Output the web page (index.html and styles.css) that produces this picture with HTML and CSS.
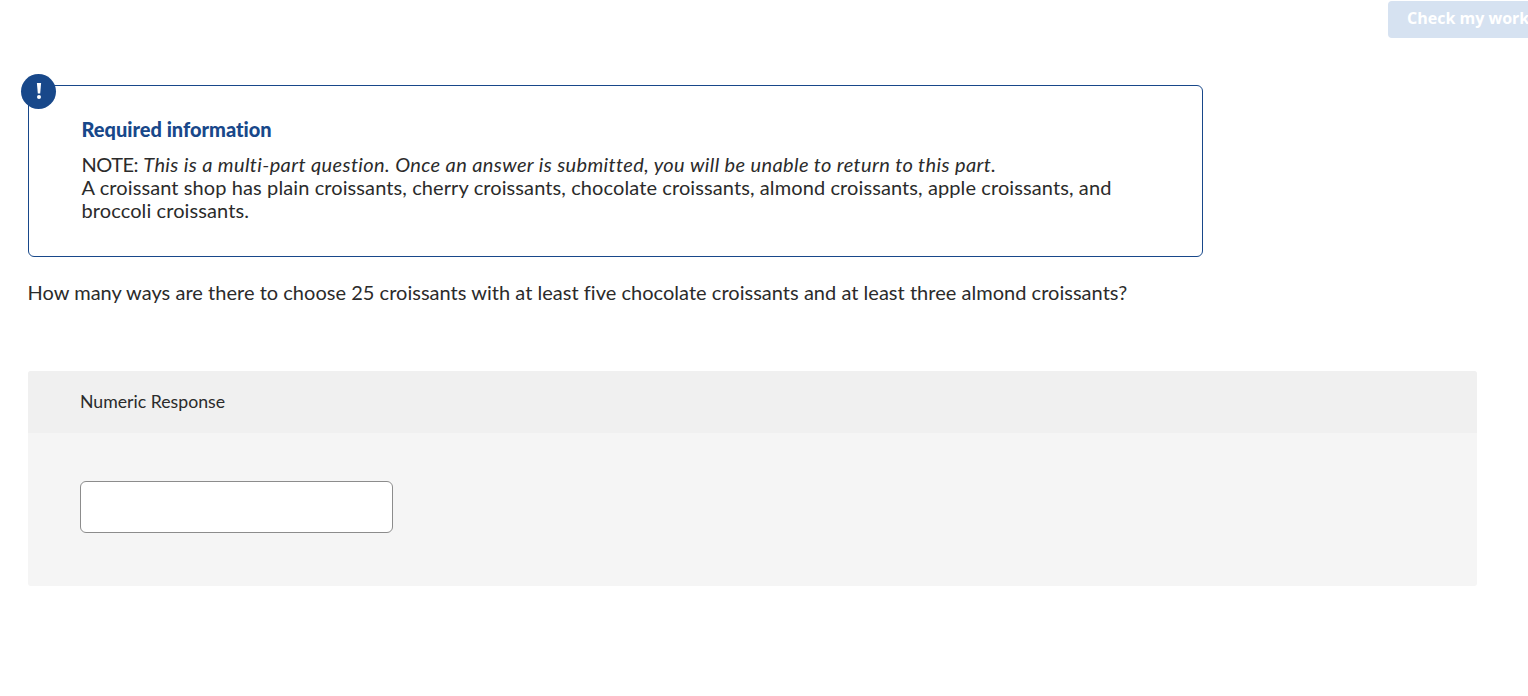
FILE: index.html
```html
<!DOCTYPE html>
<html lang="en">
<head>
<meta charset="utf-8">
<title>Required information</title>
<link rel="stylesheet" href="styles.css">
</head>
<body>
<div class="page">
  <header class="topbar"><button class="check" type="button" disabled>Check my work</button></header>
  <main class="content">
    <section class="notice">
      <span class="badge"><svg width="6" height="18" viewBox="0 0 6 18"><path d="M0.9 1h4.2L4.2 11.6H1.8z" fill="#fff"/><circle cx="3" cy="15" r="2" fill="#fff"/></svg></span>
      <h2 class="notice-title">Required information</h2>
      <p class="notice-text"><span class="note-label">NOTE:</span> <em class="note-em">This is a multi-part question. Once an answer is submitted, you will be unable to return to this part.</em><br>A croissant shop has plain croissants, cherry croissants, chocolate croissants, almond croissants, apple croissants, and broccoli croissants.</p>
    </section>
    <p class="question">How many ways are there to choose 25 croissants with at least five chocolate croissants and at least three almond croissants?</p>
    <section class="response">
      <div class="response-head">Numeric Response</div>
      <div class="response-body"><input class="answer" type="text" aria-label="Numeric Response"></div>
    </section>
  </main>
</div>
</body>
</html>
```
FILE: styles.css
```css
* { box-sizing: border-box; }
html, body { margin: 0; padding: 0; height: 100%; overflow: hidden; background: #fff; }
body { font-family: "Lato", "Liberation Sans", sans-serif; color: #2b2b2b; font-variant-ligatures: none; }
.page { width: 1528px; height: 696px; overflow: hidden; }
.topbar { display: flex; justify-content: flex-start; height: 85px; padding: 1px 0 0 1388px; }
.check { flex: none; width: 150px; height: 37px; padding: 0 0 3px 19px; border: 0; border-radius: 4px 0 0 4px; background: #d6e2f1; color: #fff; font: 700 16px/20px "Open Sans", sans-serif; text-align: left; white-space: nowrap; }
.content { padding-left: 28px; }
.notice { position: relative; width: 1175px; height: 172px; padding: 32px 52px 0 52.5px; border: 1px solid #18488a; border-radius: 6px; }
.badge { position: absolute; left: -8px; top: -12px; width: 35px; height: 35px; border-radius: 50%; background: #18488a; display: flex; align-items: center; justify-content: center; padding-bottom: 2px; }
.notice-title { margin: 0; font-size: 20px; line-height: 22px; font-weight: 900; color: #18488a; }
.notice-text { margin: 13px 0 0; font-size: 20px; line-height: 23px; letter-spacing: 0.1px; }
.note-label { letter-spacing: -0.5px; }
.note-em { letter-spacing: 0.38px; }
.question { margin: 24px 0 0 -0.5px; font-size: 20px; line-height: 23px; letter-spacing: 0.025px; }
.response { width: 1449px; margin-top: 67px; border-radius: 3px; overflow: hidden; background: #f5f5f5; }
.response-head { height: 62px; padding-left: 52px; background: #f0f0f0; font-size: 17.7px; line-height: 61px; }
.response-body { height: 153px; padding: 48px 0 0 52px; }
.answer { display: block; width: 313px; height: 52px; border: 1px solid #8c8c8c; border-radius: 6px; background: #fff; }
```
